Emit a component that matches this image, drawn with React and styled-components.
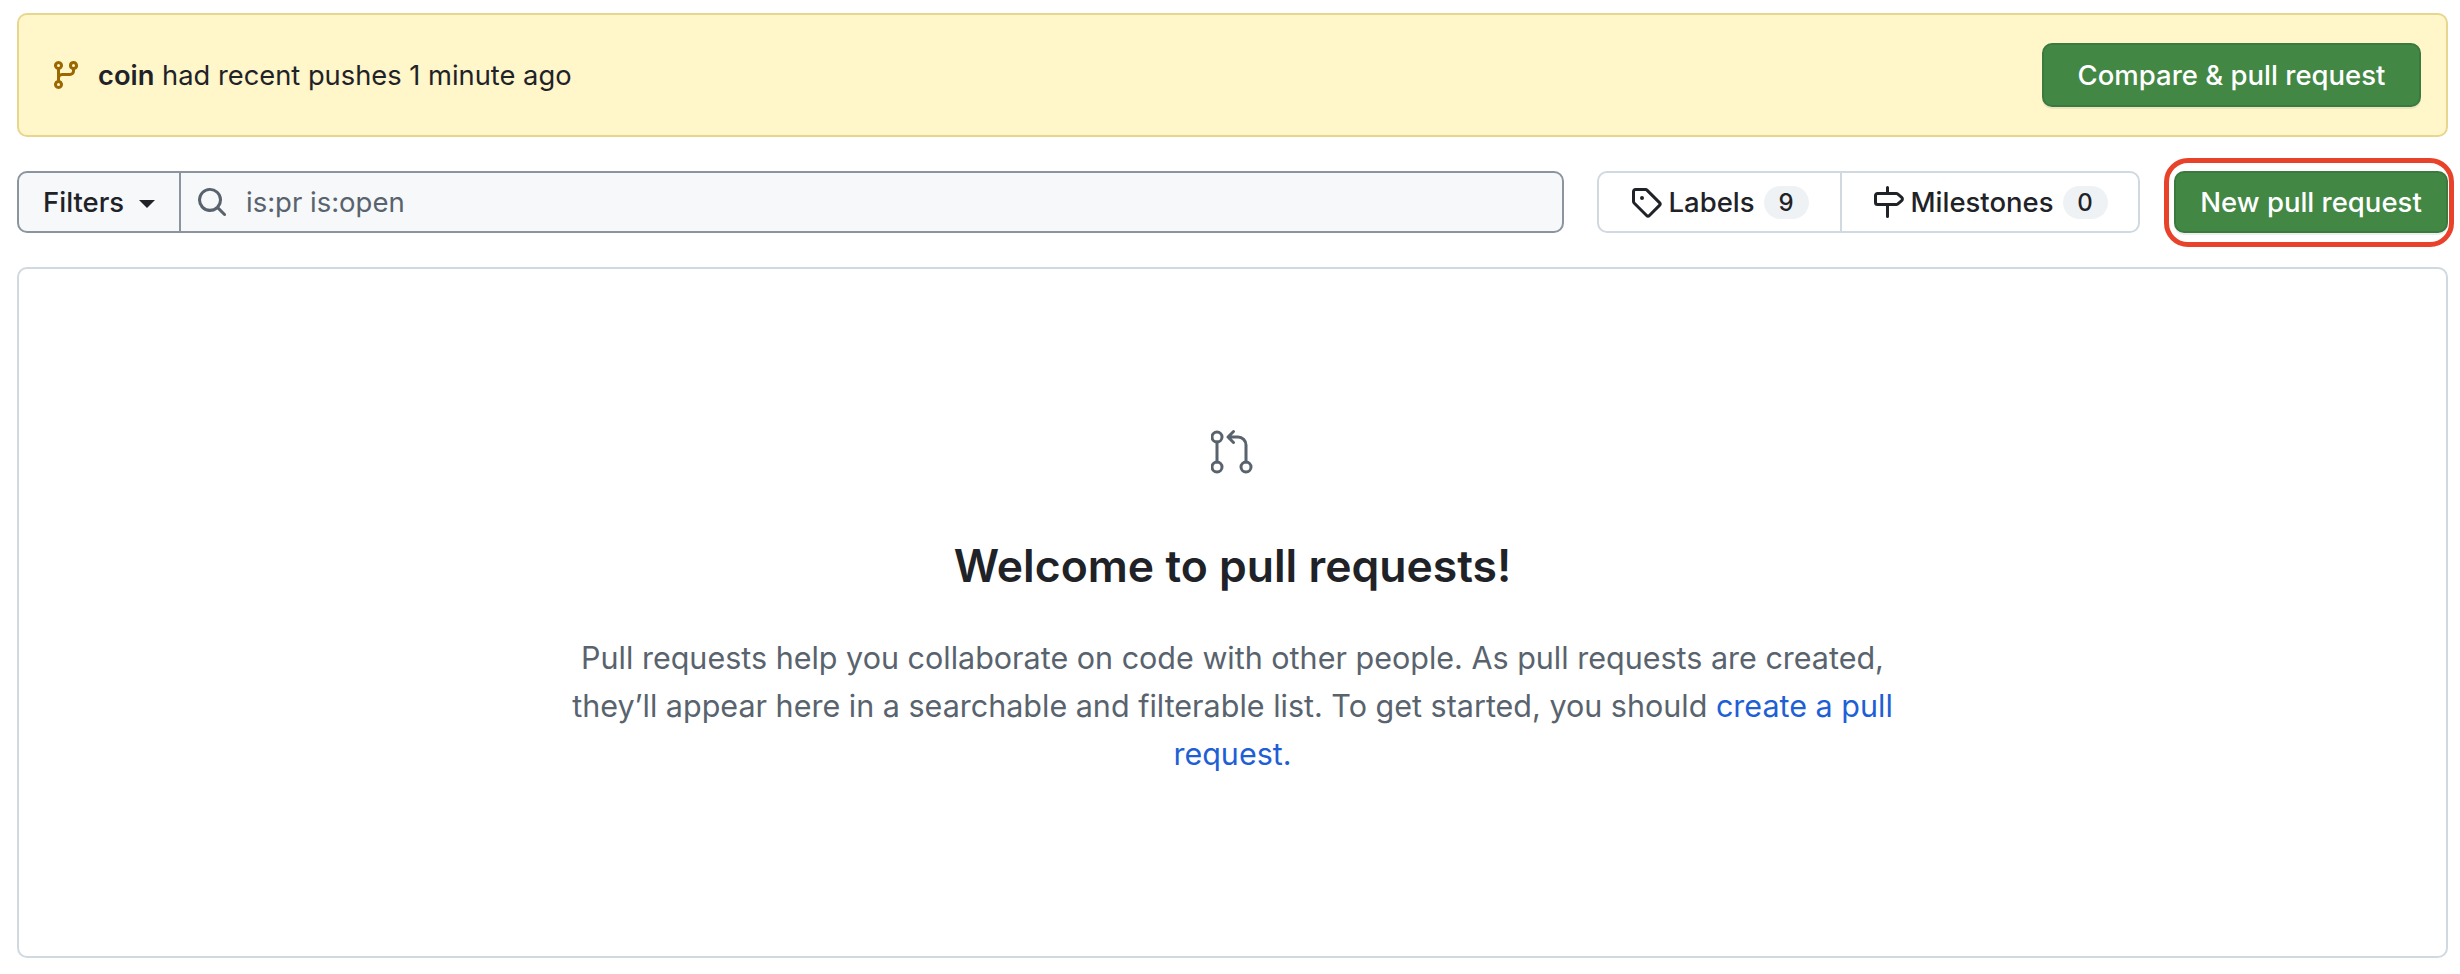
import React from 'react'
import styled, { createGlobalStyle } from 'styled-components'

const Global = createGlobalStyle`
  html, body { margin: 0; background: #fff; }
  body { font-family: Inter, "Liberation Sans", sans-serif; color: #1f2328; }
`

const Page = styled.div`
  padding: 13px 12px 16px 17px;
  display: flex;
  flex-direction: column;
  gap: 34px;
`

const Banner = styled.div`
  height: 124px;
  box-sizing: border-box;
  display: flex;
  align-items: center;
  justify-content: space-between;
  padding: 0 25px 0 31px;
  background: #fff6c9;
  border: 2px solid #e9d68e;
  border-radius: 10px;
  font-size: 27.3px;
`

const Branch = styled.div`
  display: flex;
  align-items: center;
  gap: 16px;
  color: #1f2328;
  b { font-weight: 600; }
  svg { fill: #9a6700; }
`

const GreenButton = styled.button`
  font-family: inherit;
  font-size: 27.5px;
  font-weight: 500;
  color: #fff;
  background: #438745;
  border: 2px solid #3b7a3f;
  border-radius: 10px;
  box-shadow: 0 2px 0 rgba(31, 35, 40, 0.08);
  padding: 0;
  height: ${p => p.$h}px;
  width: ${p => p.$w}px;
  position: relative;
`

const Annotated = styled(GreenButton)`
  &::after {
    content: '';
    position: absolute;
    top: -15px;
    bottom: -16px;
    left: -12px;
    right: -8px;
    border: 5px solid #e8432a;
    border-radius: 24px;
  }
`

const Toolbar = styled.div`
  display: flex;
  align-items: stretch;
  height: 62px;
`

const SearchGroup = styled.div`
  flex: 1;
  display: flex;
  align-items: stretch;
  background: #f6f8fa;
  border: 2px solid #8c959f;
  border-radius: 10px;
  margin-right: 33px;
`

const FilterButton = styled.div`
  width: 162px;
  box-sizing: border-box;
  border-right: 2px solid #8c959f;
  display: flex;
  align-items: center;
  padding-left: 24px;
  gap: 15px;
  font-size: 27.5px;
  font-weight: 500;
`

const Caret = styled.span`
  width: 0;
  height: 0;
  border-left: 8px solid transparent;
  border-right: 8px solid transparent;
  border-top: 8px solid #1f2328;
  margin-top: 3px;
`

const SearchField = styled.div`
  flex: 1;
  display: flex;
  align-items: center;
  padding-left: 15px;
  gap: 18px;
  font-size: 27.5px;
  color: #59636e;
  svg { fill: #59636e; }
`

const NavGroup = styled.div`
  display: flex;
  align-items: stretch;
  border: 2px solid #d1d9e0;
  border-radius: 10px;
  margin-right: 34px;
`

const NavItem = styled.div`
  width: ${p => p.$w}px;
  box-sizing: border-box;
  display: flex;
  align-items: center;
  justify-content: center;
  gap: 6px;
  font-size: 27.5px;
  font-weight: 500;
  & + & { border-left: 2px solid #d1d9e0; }
  svg { fill: #1f2328; flex: none; }
`

const Count = styled.span`
  min-width: 45px;
  height: 33px;
  box-sizing: border-box;
  border-radius: 20px;
  background: #eff2f5;
  margin-left: 3px;
  display: flex;
  align-items: center;
  justify-content: center;
  font-size: 24px;
  font-weight: 500;
`

const Blank = styled.div`
  height: 691px;
  box-sizing: border-box;
  border: 2px solid #d1d9e0;
  border-radius: 10px;
  display: flex;
  flex-direction: column;
  align-items: center;
  padding-top: 160px;
`

const PullIcon = styled.svg`
  fill: none;
  stroke: #59636e;
  stroke-width: 3;
  stroke-linecap: round;
  stroke-linejoin: round;
`

const Title = styled.h2`
  margin: 61px 0 0;
  font-size: 44.5px;
  line-height: 60px;
  font-weight: 600;
  color: #1f2328;
`

const Message = styled.p`
  margin: 38px 0 0;
  width: 1340px;
  text-align: center;
  font-size: 30.5px;
  line-height: 48px;
  color: #59636e;
  a { color: #1f5fd6; text-decoration: none; }
`

const Octicon = ({ size, d }) => (
  <svg width={size} height={size} viewBox="0 0 16 16" aria-hidden="true">
    <path d={d} />
  </svg>
)

const BRANCH = 'M9.5 3.25a2.25 2.25 0 1 1 3 2.122V6A2.5 2.5 0 0 1 10 8.5H6a1 1 0 0 0-1 1v1.128a2.251 2.251 0 1 1-1.5 0V5.372a2.25 2.25 0 1 1 1.5 0v1.836A2.493 2.493 0 0 1 6 7h4a1 1 0 0 0 1-1v-.628A2.25 2.25 0 0 1 9.5 3.25Zm-6 0a.75.75 0 1 0 1.5 0 .75.75 0 0 0-1.5 0Zm8.25-.75a.75.75 0 1 0 0 1.5.75.75 0 0 0 0-1.5ZM4.25 12a.75.75 0 1 0 0 1.5.75.75 0 0 0 0-1.5Z'
const SEARCH = 'M10.68 11.74a6 6 0 0 1-7.922-8.982 6 6 0 0 1 8.982 7.922l3.04 3.04a.749.749 0 0 1-.326 1.275.749.749 0 0 1-.734-.215ZM11.5 7a4.499 4.499 0 1 0-8.997 0A4.499 4.499 0 0 0 11.5 7Z'
const TAG = 'M1 7.775V2.75C1 1.784 1.784 1 2.75 1h5.025c.464 0 .91.184 1.238.513l6.25 6.25a1.75 1.75 0 0 1 0 2.474l-5.026 5.026a1.75 1.75 0 0 1-2.474 0l-6.25-6.25A1.752 1.752 0 0 1 1 7.775Zm1.5 0c0 .066.026.13.073.177l6.25 6.25a.25.25 0 0 0 .354 0l5.025-5.025a.25.25 0 0 0 0-.354l-6.25-6.25a.25.25 0 0 0-.177-.073H2.75a.25.25 0 0 0-.25.25ZM6 5a1 1 0 1 1 0 2 1 1 0 0 1 0-2Z'
const MILESTONE = 'M7.75 0a.75.75 0 0 1 .75.75V3h3.634c.414 0 .814.147 1.13.414l2.07 1.75a1.75 1.75 0 0 1 0 2.672l-2.07 1.75a1.75 1.75 0 0 1-1.13.414H8.5v5.25a.75.75 0 0 1-1.5 0V10H2.75A1.75 1.75 0 0 1 1 8.25v-3.5C1 3.784 1.784 3 2.75 3H7V.75A.75.75 0 0 1 7.75 0Zm4.384 8.5a.25.25 0 0 0 .161-.06l2.07-1.75a.248.248 0 0 0 0-.38l-2.07-1.75a.25.25 0 0 0-.161-.06H2.75a.25.25 0 0 0-.25.25v3.5c0 .138.112.25.25.25h9.384Z'

const App = () => (
  <Page>
    <Global />
    <Banner>
      <Branch>
        <Octicon size={32} d={BRANCH} />
        <span><b>coin</b> had recent pushes 1 minute ago</span>
      </Branch>
      <GreenButton $w={379} $h={64}>Compare &amp; pull request</GreenButton>
    </Banner>
    <Toolbar>
      <SearchGroup>
        <FilterButton>Filters <Caret /></FilterButton>
        <SearchField>
          <Octicon size={32} d={SEARCH} />
          is:pr is:open
        </SearchField>
      </SearchGroup>
      <NavGroup>
        <NavItem $w={241}><Octicon size={32} d={TAG} />Labels <Count>9</Count></NavItem>
        <NavItem $w={298}><Octicon size={32} d={MILESTONE} />Milestones <Count>0</Count></NavItem>
      </NavGroup>
      <Annotated $w={274} $h={62}>New pull request</Annotated>
    </Toolbar>
    <Blank>
      <PullIcon width="44" height="46" viewBox="0 0 44 46" aria-hidden="true">
        <circle cx="6" cy="8" r="5" />
        <circle cx="6" cy="38" r="5" />
        <circle cx="35" cy="38" r="5" />
        <path d="M6 13V33M35 33V16a8 8 0 0 0-8-8H17M22.5 2.5L17 8l5.5 5.5" />
      </PullIcon>
      <Title>Welcome to pull requests!</Title>
      <Message>
        Pull requests help you collaborate on code with other people. As pull requests are created, they’ll appear here in a searchable and filterable list. To get started, you should <a href="#new">create a pull request.</a>
      </Message>
    </Blank>
  </Page>
)

export default App
